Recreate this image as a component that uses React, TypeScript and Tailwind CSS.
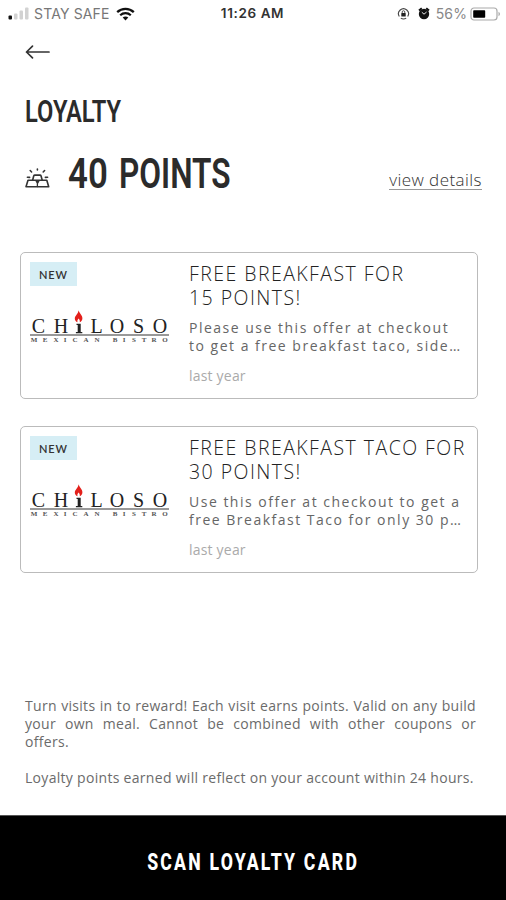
const offers = [
  {
    id: 1,
    title: ['FREE BREAKFAST FOR', '15 POINTS!'],
    description: [
      'Please use this offer at checkout',
      'to get a free breakfast taco, side…',
    ],
    date: 'last year',
  },
  {
    id: 2,
    title: ['FREE BREAKFAST TACO FOR', '30 POINTS!'],
    description: [
      'Use this offer at checkout to get a',
      'free Breakfast Taco for only 30 p…',
    ],
    date: 'last year',
  },
];

function StatusBar() {
  return (
    <div className="grid h-[27px] grid-cols-3 items-center pl-2 pr-[5px] font-['Inter','Liberation_Sans',sans-serif] text-[14px] leading-none">
      <div className="flex items-center text-[#777]">
        <svg width="22" height="14" viewBox="0 0 22 14">
          <rect x="0.5" y="8.5" width="3.5" height="4" rx="1" fill="#111" />
          <rect x="6" y="6.5" width="3.5" height="6" rx="1" fill="#d2d2d2" />
          <rect x="11.5" y="3.5" width="3.5" height="9" rx="1" fill="#d2d2d2" />
          <rect x="17" y="0.5" width="3.5" height="12" rx="1" fill="#d2d2d2" />
        </svg>
        <span className="ml-1 whitespace-nowrap tracking-[0.15px]">STAY SAFE</span>
        <svg className="ml-[6px]" width="19" height="14" viewBox="0 0 19 14" fill="none" stroke="#111">
          <path d="M1.2 5.2C5.8.8 13.2.8 17.8 5.2" strokeWidth="2.3" />
          <path d="M4.2 8.3c3-2.8 7.6-2.8 10.6 0" strokeWidth="2.2" />
          <path d="M9.5 13.4 6.7 10.6c1.6-1.4 4-1.4 5.6 0Z" fill="#111" stroke="none" />
        </svg>
      </div>
      <div className="pr-1 text-center text-[13.5px] font-semibold tracking-[0.6px] text-[#333]">11:26 AM</div>
      <div className="flex items-center justify-end text-[#888]">
        <svg width="13" height="13" viewBox="0 0 13 13" fill="none" stroke="#444">
          <path d="M2.300 9.500a5 5 0 1 1 8.400 0M3.800 11.100a5 5 0 0 0 5.400 0" strokeWidth="1.1" />
          <rect x="4.3" y="6" width="4.4" height="3.5" rx="0.5" fill="#222" stroke="none" />
          <path d="M5.200 6V5a1.300 1.300 0 0 1 2.600 0v1" strokeWidth="0.9" />
        </svg>
        <svg className="ml-2" width="12" height="13" viewBox="0 0 12 13">
          <circle cx="6" cy="7" r="5.2" fill="#111" />
          <path d="M1 3.6 3.8 1.2M11 3.6 8.2 1.2" stroke="#111" strokeWidth="2" />
          <path d="M3.8 5.200 6 7.200l2.600-2.200" fill="none" stroke="#fff" strokeWidth="0.9" />
        </svg>
        <span className="ml-[6px] tracking-[0.1px]">56%</span>
        <svg className="ml-[3px]" width="31" height="14" viewBox="0 0 31 14">
          <rect x="1" y="1" width="26" height="12" rx="3" fill="none" stroke="#aaa" strokeWidth="1.2" />
          <rect x="3.2" y="3.2" width="12" height="7.6" rx="0.8" fill="#000" />
          <path d="M28.5 4.8c2 .8 2 3.6 0 4.4Z" fill="#aaa" />
        </svg>
      </div>
    </div>
  );
}

function GoldIcon() {
  return (
    <svg width="26" height="24" viewBox="0 0 26 24" fill="none" stroke="#333" strokeWidth="1.6" strokeLinejoin="round" strokeLinecap="round">
      <path d="M3 15.300h18.800l1.900 6.400H1Z" />
      <path d="M7.600 15.200 8.700 11c.2-.6.6-.9 1.200-.9h5c.6 0 1 .3 1.200.9l1.100 4.200" />
      <path d="M11 15.800h3l-1.500 2.700ZM12.400 18v3.500" fill="#333" strokeWidth="1.3" />
      <path d="M12.400 4v1M5.200 5.500 6.600 7M19.600 5.500 18.200 7M2.400 12.200l2.200.2M22.600 12.200l-2.200.2" />
    </svg>
  );
}

function ChilosoLogo() {
  return (
    <svg width="140" height="36" viewBox="0 0 140 36" textAnchor="middle">
      <path d="M0 27h139" stroke="#999" strokeWidth="2.2" />
      <g fontFamily="'Liberation Serif', serif" fill="#222">
        <text x="8.5 31" y="25" fontSize="20">CH</text>
        <text x="66.5 87 108.5 130" y="25" fontSize="20">LOSO</text>
        <path d="M46.500 15.800h4.200v8.200h1.600v1.200h-6.400V24h1.800v-7h-1.200Z" />
        <text x="4 15 26 35 45 56 67 85 94 104 114 124 135" y="33.5" fontSize="7" fontWeight="bold" fill="#555">
          MEXICANBISTRO
        </text>
      </g>
      <path
        d="M48.600 2.200c.2 2.200 3.800 4.800 3.800 8 0 2-1.200 3.400-2.700 4 .5-1.600-.2-2.600-1.200-3.800-.9 1.200-1.500 2.300-.9 3.800-1.800-.7-2.800-2.100-2.800-3.800 0-2.600 3.400-4.600 3.800-8.200Z"
        fill="#e3201b"
      />
    </svg>
  );
}

function OfferCard({ offer }: { offer: (typeof offers)[number] }) {
  return (
    <article className="flex h-[147px] rounded-[5px] border-[1.5px] border-[#bbb] bg-white">
      <div className="w-[168px] shrink-0 pl-[9px] pt-[9px]">
        <span className="flex h-6 w-[47px] items-center justify-center bg-[#d6eef5] pt-[2px] font-['Lato',sans-serif] text-[11px] font-semibold tracking-[0.9px] text-[#333]">
          NEW
        </span>
        <div className="mt-[22px]">
          <ChilosoLogo />
        </div>
      </div>
      <div className="whitespace-nowrap pt-[9px]">
        <h2 className="text-[19.5px] font-light leading-6 tracking-[1.45px] text-[#222]">
          {offer.title.map((line) => (
            <span key={line} className="block">{line}</span>
          ))}
        </h2>
        <p className="mt-[9px] text-[14px] leading-[18px] tracking-[1.5px] text-[#666]">
          {offer.description.map((line) => (
            <span key={line} className="block">{line}</span>
          ))}
        </p>
        <p className="mt-3 text-[14px] leading-[18px] tracking-[0.2px] text-[#aaa]">{offer.date}</p>
      </div>
    </article>
  );
}

export default function App() {
  return (
    <div className="flex h-[900px] w-[506px] flex-col overflow-hidden bg-white font-['Open_Sans',sans-serif]">
      <StatusBar />

      <header className="px-[25px] pt-[17px]">
        <button className="block" aria-label="Back">
          <svg width="25" height="16" viewBox="0 0 25 16" fill="none" stroke="#333" strokeWidth="1.7" strokeLinecap="round" strokeLinejoin="round">
            <path d="M1.500 8H24M7.500 2.200 1.500 8l6 5.800" />
          </svg>
        </button>
        <h1 className="mt-[31px] h-10 whitespace-nowrap font-['Roboto',sans-serif] text-[32px] font-semibold leading-10 text-[#2b2b2b]">
          <span className="inline-block origin-left scale-x-[0.74]">LOYALTY</span>
        </h1>
        <div className="mt-[15px] flex h-[54px] items-center">
          <div className="w-[43px] pt-2">
            <GoldIcon />
          </div>
          <div className="flex whitespace-nowrap font-['Roboto',sans-serif] text-[43px] font-semibold leading-[54px] text-[#2b2b2b]">
            <span className="w-[51px] origin-left scale-x-[0.81]">40</span>
            <span className="w-[150px] origin-left scale-x-[0.735]">POINTS</span>
          </div>
          <a className="mr-[-1px] mt-[14px] ml-auto whitespace-nowrap border-b border-[#999] text-[17px] font-light leading-[19px] tracking-[0.45px] text-[#333]">
            view details
          </a>
        </div>
      </header>

      <main className="mt-[52px] flex flex-col gap-[27px] pl-5 pr-[28px]">
        {offers.map((offer) => (
          <OfferCard key={offer.id} offer={offer} />
        ))}
      </main>

      <section className="mt-auto w-[476px] pb-[28px] pl-[25px] text-justify text-[14px] leading-[18px] tracking-[0.3px] text-[#6b6b6b]">
        <p>
          Turn visits in to reward! Each visit earns points. Valid on any build
          your own meal. Cannot be combined with other coupons or offers.
        </p>
        <p className="mt-[18px] whitespace-nowrap">
          Loyalty points earned will reflect on your account within 24 hours.
        </p>
      </section>

      <button className="flex h-[85px] shrink-0 items-center justify-center border-t border-[#555] bg-black pt-[7px] font-['Roboto',sans-serif] text-[24px] font-extrabold tracking-[3px] text-white">
        <span className="inline-block scale-x-[0.735] whitespace-nowrap">SCAN LOYALTY CARD</span>
      </button>
    </div>
  );
}
